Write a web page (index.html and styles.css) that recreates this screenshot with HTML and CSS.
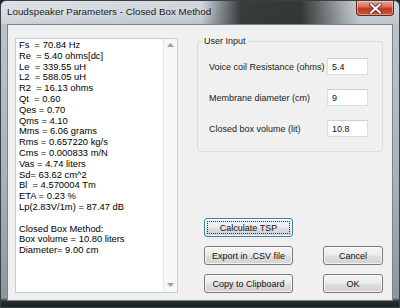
FILE: index.html
```html
<!DOCTYPE html>
<html lang="en">
<head>
    <meta charset="UTF-8">
    <title>Loudspeaker Parameters - Closed Box Method</title>
    <link rel="stylesheet" href="styles.css">
</head>
<body>
    <div class="window">
        <!-- Title bar -->
        <div class="titlebar">
            <span class="title">Loudspeaker Parameters - Closed Box Method</span>
            <div class="close-btn">
                <svg width="13" height="11" viewBox="0 0 13 11">
                    <path d="M2 1.5 L11 9.5 M11 1.5 L2 9.5" stroke="#5a2a22" stroke-width="3.6" stroke-linecap="square"/>
                    <path d="M2 1.5 L11 9.5 M11 1.5 L2 9.5" stroke="#ffffff" stroke-width="2" stroke-linecap="square"/>
                </svg>
            </div>
        </div>

        <div class="client">
            <!-- Results box -->
            <div class="results">
                <div class="results-text">Fs&nbsp; = 70.84 Hz
Re&nbsp; = 5.40 ohms[dc]
Le&nbsp; = 339.55 uH
L2  = 588.05 uH
R2&nbsp; = 16.13 ohms
Qt&nbsp; = 0.60
Qes = 0.70
Qms = 4.10
Mms = 6.06 grams
Rms = 0.657220 kg/s
Cms = 0.000833 m/N
Vas = 4.74 liters
Sd= 63.62 cm^2
Bl&nbsp; = 4.570004 Tm
ETA = 0.23 %
Lp(2.83V/1m) = 87.47 dB

Closed Box Method:
Box volume = 10.80 liters
Diameter= 9.00 cm</div>
                <div class="scrollbar">
                    <svg width="7" height="4" viewBox="0 0 7 4"><path d="M3.5 0 L7 4 L0 4 Z" fill="#a0a0a0"/></svg>
                    <svg width="7" height="4" viewBox="0 0 7 4"><path d="M0 0 L7 0 L3.5 4 Z" fill="#a0a0a0"/></svg>
                </div>
            </div>

            <!-- Inputs and actions -->
            <div class="side">
                <div class="group">
                    <span class="group-title">User Input</span>
                    <div class="field">
                        <label for="rdc">Voice coil Resistance (ohms)</label>
                        <input id="rdc" type="text" value="5.4">
                    </div>
                    <div class="field">
                        <label for="diam">Membrane diameter (cm)</label>
                        <input id="diam" type="text" value="9">
                    </div>
                    <div class="field">
                        <label for="vol">Closed box volume (lit)</label>
                        <input id="vol" type="text" value="10.8">
                    </div>
                </div>

                <div class="actions">
                    <button class="btn focused"><span>Calculate TSP</span></button>
                    <span></span>
                    <button class="btn">Export in .CSV file</button>
                    <button class="btn">Cancel</button>
                    <button class="btn">Copy to Clipboard</button>
                    <button class="btn">OK</button>
                </div>
            </div>
        </div>
    </div>
</body>
</html>
```

FILE: styles.css
```css
body {
    margin: 0;
    padding: 0;
    background-color: #1f2622;
    font-family: "Liberation Sans", Arial, sans-serif;
}
.window {
    width: 400px;
    height: 308px;
    box-sizing: border-box;
    display: flex;
    flex-direction: column;
    border: 1px solid #3a4146;
    border-radius: 6px 6px 0 0;
    background: linear-gradient(to bottom, #d3d9de 0, #bcc4ca 24px, #a9b1b7 60%, #8e969b calc(100% - 9px), #27302b calc(100% - 6px), #1a211d 100%);
}
/* Title bar */
.titlebar {
    height: 23px;
    display: flex;
    align-items: flex-start;
    justify-content: space-between;
    background: linear-gradient(to right, rgba(255,255,255,0.25) 0, rgba(255,255,255,0) 200px, rgba(30,34,32,0.85) 240px, rgba(35,40,36,0.9) 300px, rgba(120,125,125,0.4) 345px, rgba(200,205,210,0.2) 360px);
    border-radius: 6px 6px 0 0;
}
.title {
    margin: 5px 0 0 6px;
    font-size: 9.8px;
    color: #1a1a1a;
    white-space: nowrap;
    text-shadow: 0 0 6px rgba(255,255,255,0.9);
}
.close-btn {
    width: 38px;
    height: 15px;
    margin-right: 5px;
    box-sizing: border-box;
    display: flex;
    align-items: center;
    justify-content: center;
    border: 1px solid #5b2a22;
    border-top: none;
    border-radius: 0 0 4px 4px;
    background: linear-gradient(to bottom, #e7a698 0, #d6705c 40%, #c2391e 55%, #cd5433 100%);
    box-shadow: inset 0 0 0 1px rgba(255,220,210,0.5);
}
/* Client area */
.client {
    flex: 1;
    margin: 0 6px 6px 6px;
    display: flex;
    gap: 19px;
    padding: 13px 9px 7px 7px;
    background-color: #f0f0f0;
    border: 1px solid #7d858a;
}
.results {
    width: 164px;
    box-sizing: border-box;
    display: flex;
    background-color: #ffffff;
    border: 1px solid #c6ccd2;
}
.results-text {
    flex: 1;
    padding: 1px 3px;
    font-size: 9.4px;
    line-height: 10.8px;
    color: #000000;
    white-space: pre;
    overflow: hidden;
}
.scrollbar {
    width: 13px;
    display: flex;
    flex-direction: column;
    align-items: center;
    justify-content: space-between;
    padding: 4px 0 5px 0;
    background-color: #f7f7f7;
    border-left: 1px solid #e6e6e6;
}
.side {
    flex: 1;
    display: flex;
    flex-direction: column;
    justify-content: space-between;
}
/* User input group */
.group {
    position: relative;
    margin-top: 3px;
    height: 111px;
    box-sizing: border-box;
    border: 1px solid #d5dce2;
    border-radius: 3px;
    padding: 16px 14px 0 11px;
    display: flex;
    flex-direction: column;
    gap: 14px;
}
.group-title {
    position: absolute;
    top: -6px;
    left: 4px;
    padding: 0 2px;
    font-size: 9px;
    color: #1a1a1a;
    background-color: #f0f0f0;
}
.field {
    display: flex;
    align-items: center;
    justify-content: space-between;
}
.field label {
    font-size: 9px;
    color: #1a1a1a;
}
.field input {
    width: 41px;
    height: 17px;
    box-sizing: border-box;
    padding: 0 4px;
    font-family: "Liberation Sans", Arial, sans-serif;
    font-size: 9px;
    color: #111111;
    border: 1px solid #dadfe3;
    border-top-color: #c9cfd4;
    background-color: #ffffff;
}
/* Buttons */
.actions {
    display: grid;
    grid-template-columns: 89px 60px;
    column-gap: 30px;
    row-gap: 9px;
    padding-left: 7px;
}
.btn {
    height: 19px;
    padding: 0;
    font-family: "Liberation Sans", Arial, sans-serif;
    font-size: 9px;
    color: #111111;
    border: 1px solid #7a7a7a;
    border-radius: 3px;
    background: linear-gradient(to bottom, #f4f4f4 0, #ececec 48%, #dedede 52%, #d2d2d2 100%);
    box-shadow: inset 0 0 0 1px rgba(255,255,255,0.7);
}
.btn.focused {
    border-color: #3c7fb1;
    padding: 2px;
}
.btn.focused span {
    display: flex;
    align-items: center;
    justify-content: center;
    height: 100%;
    border: 1px dotted #333333;
    box-sizing: border-box;
}
```
